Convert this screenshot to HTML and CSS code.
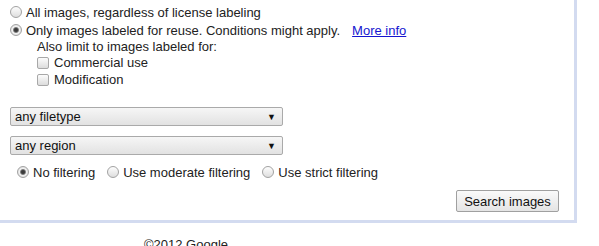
FILE: index.html
```html
<!DOCTYPE html>
<html>
<head>
<meta charset="utf-8">
<link rel="stylesheet" href="styles.css">
</head>
<body>
<div class="box">
  <div class="license">
    <label class="row"><input type="radio" name="lic" class="radio"><span>All images, regardless of license labeling</span></label>
    <label class="row"><input type="radio" name="lic" class="radio" checked><span>Only images labeled for reuse. Conditions might apply.</span><a href="#" class="more">More info</a></label>
    <div class="sub">
      <div class="subhead">Also limit to images labeled for:</div>
      <label class="crow"><input type="checkbox" class="check"><span>Commercial use</span></label>
      <label class="crow"><input type="checkbox" class="check"><span>Modification</span></label>
    </div>
  </div>
  <div class="selects">
    <div class="select"><span>any filetype</span><span class="arrow">▼</span></div>
    <div class="select"><span>any region</span><span class="arrow">▼</span></div>
  </div>
  <div class="filters">
    <label class="frow"><input type="radio" name="safe" class="radio" checked><span>No filtering</span></label>
    <label class="frow"><input type="radio" name="safe" class="radio"><span>Use moderate filtering</span></label>
    <label class="frow"><input type="radio" name="safe" class="radio"><span>Use strict filtering</span></label>
  </div>
  <div class="actions">
    <button class="btn">Search images</button>
  </div>
</div>
<div class="footer">©2012 Google</div>
</body>
</html>
```
FILE: styles.css
```css
html, body {
  margin: 0;
  padding: 0;
  background: #fff;
}
body {
  font-family: "Liberation Sans", Arial, sans-serif;
  font-size: 13px;
  color: #222;
}
.box {
  width: 574px;
  height: 220px;
  border-right: 3px solid #d3dbf0;
  border-bottom: 3px solid #d3dbf0;
  display: flex;
  flex-direction: column;
}
.license {
  padding-top: 3px;
  padding-left: 10px;
}
.row {
  display: flex;
  align-items: center;
  height: 18px;
  gap: 4px;
}
.more {
  color: #1515d0;
  text-decoration: underline;
  margin-left: 8px;
}
.sub {
  padding-left: 27px;
}
.subhead {
  height: 15px;
  line-height: 15px;
}
.crow {
  display: flex;
  align-items: center;
  height: 17px;
  gap: 5px;
}
.radio {
  appearance: none;
  -webkit-appearance: none;
  margin: 0;
  width: 12px;
  height: 12px;
  border-radius: 50%;
  border: 1px solid #a2a2a2;
  background: linear-gradient(#fdfdfd, #dedede);
  box-sizing: border-box;
  flex: none;
}
.radio:checked {
  background: radial-gradient(circle, #333 0, #444 1.8px, #8a8a8a 2.6px, #f2f2f2 3.4px, #d8d8d8 6px);
}
.check {
  appearance: none;
  -webkit-appearance: none;
  margin: 0;
  width: 12px;
  height: 12px;
  border-radius: 2px;
  border: 1px solid #a8a8a8;
  background: linear-gradient(#fcfcfc, #dcdcdc);
  box-sizing: border-box;
  flex: none;
}
.selects {
  padding-left: 10px;
  margin-top: 19px;
  display: flex;
  flex-direction: column;
  gap: 10px;
}
.select {
  width: 273px;
  height: 19px;
  box-sizing: border-box;
  border: 1px solid #aaa;
  border-radius: 2px;
  background: linear-gradient(#f6f6f6, #e2e2e2);
  display: flex;
  align-items: center;
  justify-content: space-between;
  padding: 0 6px 0 4px;
  color: #111;
}
.arrow {
  font-size: 9px;
  color: #111;
}
.filters {
  display: flex;
  align-items: center;
  padding-left: 17px;
  margin-top: 8px;
  height: 18px;
}
.frow {
  display: flex;
  align-items: center;
  gap: 4px;
  margin-right: 12px;
}
.actions {
  display: flex;
  justify-content: flex-end;
  padding-right: 15px;
  margin-top: 9px;
}
.btn {
  font-family: "Liberation Sans", Arial, sans-serif;
  font-size: 13px;
  color: #111;
  width: 103px;
  height: 22px;
  border: 1px solid #a0a0a0;
  border-radius: 2px;
  background: linear-gradient(#fafafa, #e4e4e4);
  padding: 0;
}
.footer {
  padding-left: 144px;
  margin-top: 14px;
  color: #222;
}
```
